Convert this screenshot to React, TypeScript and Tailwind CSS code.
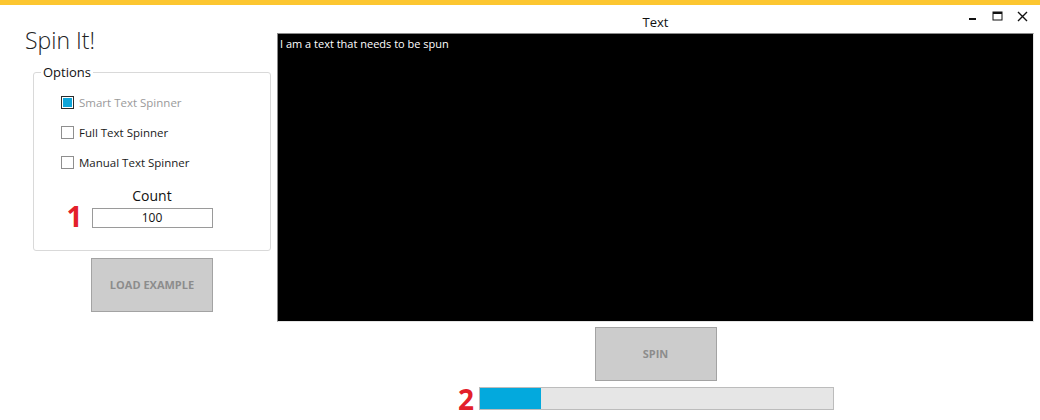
import React from 'react';

const FONT = '[font-family:"Open_Sans","Noto_Sans",sans-serif]';

const options = [
  { label: 'Smart Text Spinner', checked: true, disabled: true },
  { label: 'Full Text Spinner', checked: false, disabled: false },
  { label: 'Manual Text Spinner', checked: false, disabled: false },
];

const Checkbox: React.FC<{ label: string; checked: boolean; disabled: boolean }> = ({ label, checked, disabled }) => (
  <div className="flex items-center h-[13px] gap-[5px]">
    <div
      className={
        checked
          ? 'w-[13px] h-[13px] border border-[#2b2b2b] bg-white p-[1px]'
          : 'w-[13px] h-[13px] border border-[#8f8f8f] bg-white'
      }
    >
      {checked && <div className="w-full h-full bg-[#0ea5d9]" />}
    </div>
    <span className={disabled ? 'text-[11.5px] text-[#9a9a9a]' : 'text-[11.5px] text-[#1a1a1a]'}>{label}</span>
  </div>
);

const WindowControls = () => (
  <div className="absolute top-[10px] right-[12px] flex items-center gap-[14px]">
    <svg width="10" height="12" viewBox="0 0 10 12">
      <rect x="1" y="8" width="7" height="2" fill="#111" />
    </svg>
    <svg width="11" height="11" viewBox="0 0 11 11">
      <rect x="1" y="1" width="9" height="8" fill="none" stroke="#111" strokeWidth="1" />
      <rect x="1" y="1" width="9" height="2" fill="#111" />
    </svg>
    <svg width="11" height="11" viewBox="0 0 11 11">
      <path d="M1 1 L10 10 M10 1 L1 10" stroke="#111" strokeWidth="1.4" />
    </svg>
  </div>
);

export default function App() {
  return (
    <div className={`relative w-[1040px] h-[420px] bg-white overflow-hidden ${FONT}`}>
      <div className="h-[5px] bg-[#fcc630]" />
      <WindowControls />
      <div className="flex">
        {/* left column */}
        <div className="w-[277px] shrink-0">
          <div className="pl-[25px] pt-[19px] text-[23px] leading-[33px] font-light text-[#222]">Spin It!</div>
          <fieldset className="ml-[33px] mt-[7px] w-[238px] h-[187px] border border-[#d9d9d9] rounded-[3px] px-[27px]">
            <legend className="ml-[-20px] px-[2px] text-[13px] leading-[17px] text-[#111]">Options</legend>
            <div className="flex flex-col gap-[17px] pt-[15px]">
              {options.map((o) => (
                <Checkbox key={o.label} {...o} />
              ))}
            </div>
            <div className="flex flex-col items-center mt-[17px] -ml-[27px] -mr-[27px]">
              <div className="text-[14px] leading-[19px] text-[#111]">Count</div>
              <div className="relative -mt-[1px]">
                <span className="absolute right-full mr-[9px] top-[-3px] text-[28px] leading-[30px] font-bold text-[#e3202a]">1</span>
                <input
                  readOnly
                  value="100"
                  className="w-[121px] h-[20px] border border-[#9a9a9a] text-center text-[12px] text-[#111] outline-none"
                />
              </div>
            </div>
          </fieldset>
          <div className="flex justify-center ml-[33px] w-[238px] mt-[7px]">
            <button className="w-[122px] h-[54px] bg-[#cccccc] border border-[#a3a3a3] text-[11px] font-bold text-[#8c8c8c]">
              LOAD EXAMPLE
            </button>
          </div>
        </div>

        {/* right column */}
        <div className="w-[757px] flex flex-col items-center">
          <div className="pt-[8px] text-[13px] leading-[19px] text-[#111]">Text</div>
          <div className="mt-[1px] w-full h-[289px] bg-black border-t border-l border-[#8a8a8a] border-r border-r-[#e4e4e4] border-b border-b-[#e4e4e4] px-[2px] pt-[3px]">
            <div className="text-[11px] leading-[14px] text-white">I am a text that needs to be spun</div>
          </div>
          <button className="mt-[5px] w-[122px] h-[54px] bg-[#cccccc] border border-[#a3a3a3] text-[11px] font-bold text-[#8c8c8c]">
            SPIN
          </button>
          <div className="relative mt-[6px] ml-[2px] w-[355px] h-[23px] bg-[#e6e6e6] border border-[#bcbcbc]">
            <span className="absolute right-full mr-[6px] top-[-4px] text-[28px] leading-[30px] font-bold text-[#e3202a]">2</span>
            <div className="h-full w-[61px] bg-[#03a9dd]" />
          </div>
        </div>
      </div>
    </div>
  );
}
